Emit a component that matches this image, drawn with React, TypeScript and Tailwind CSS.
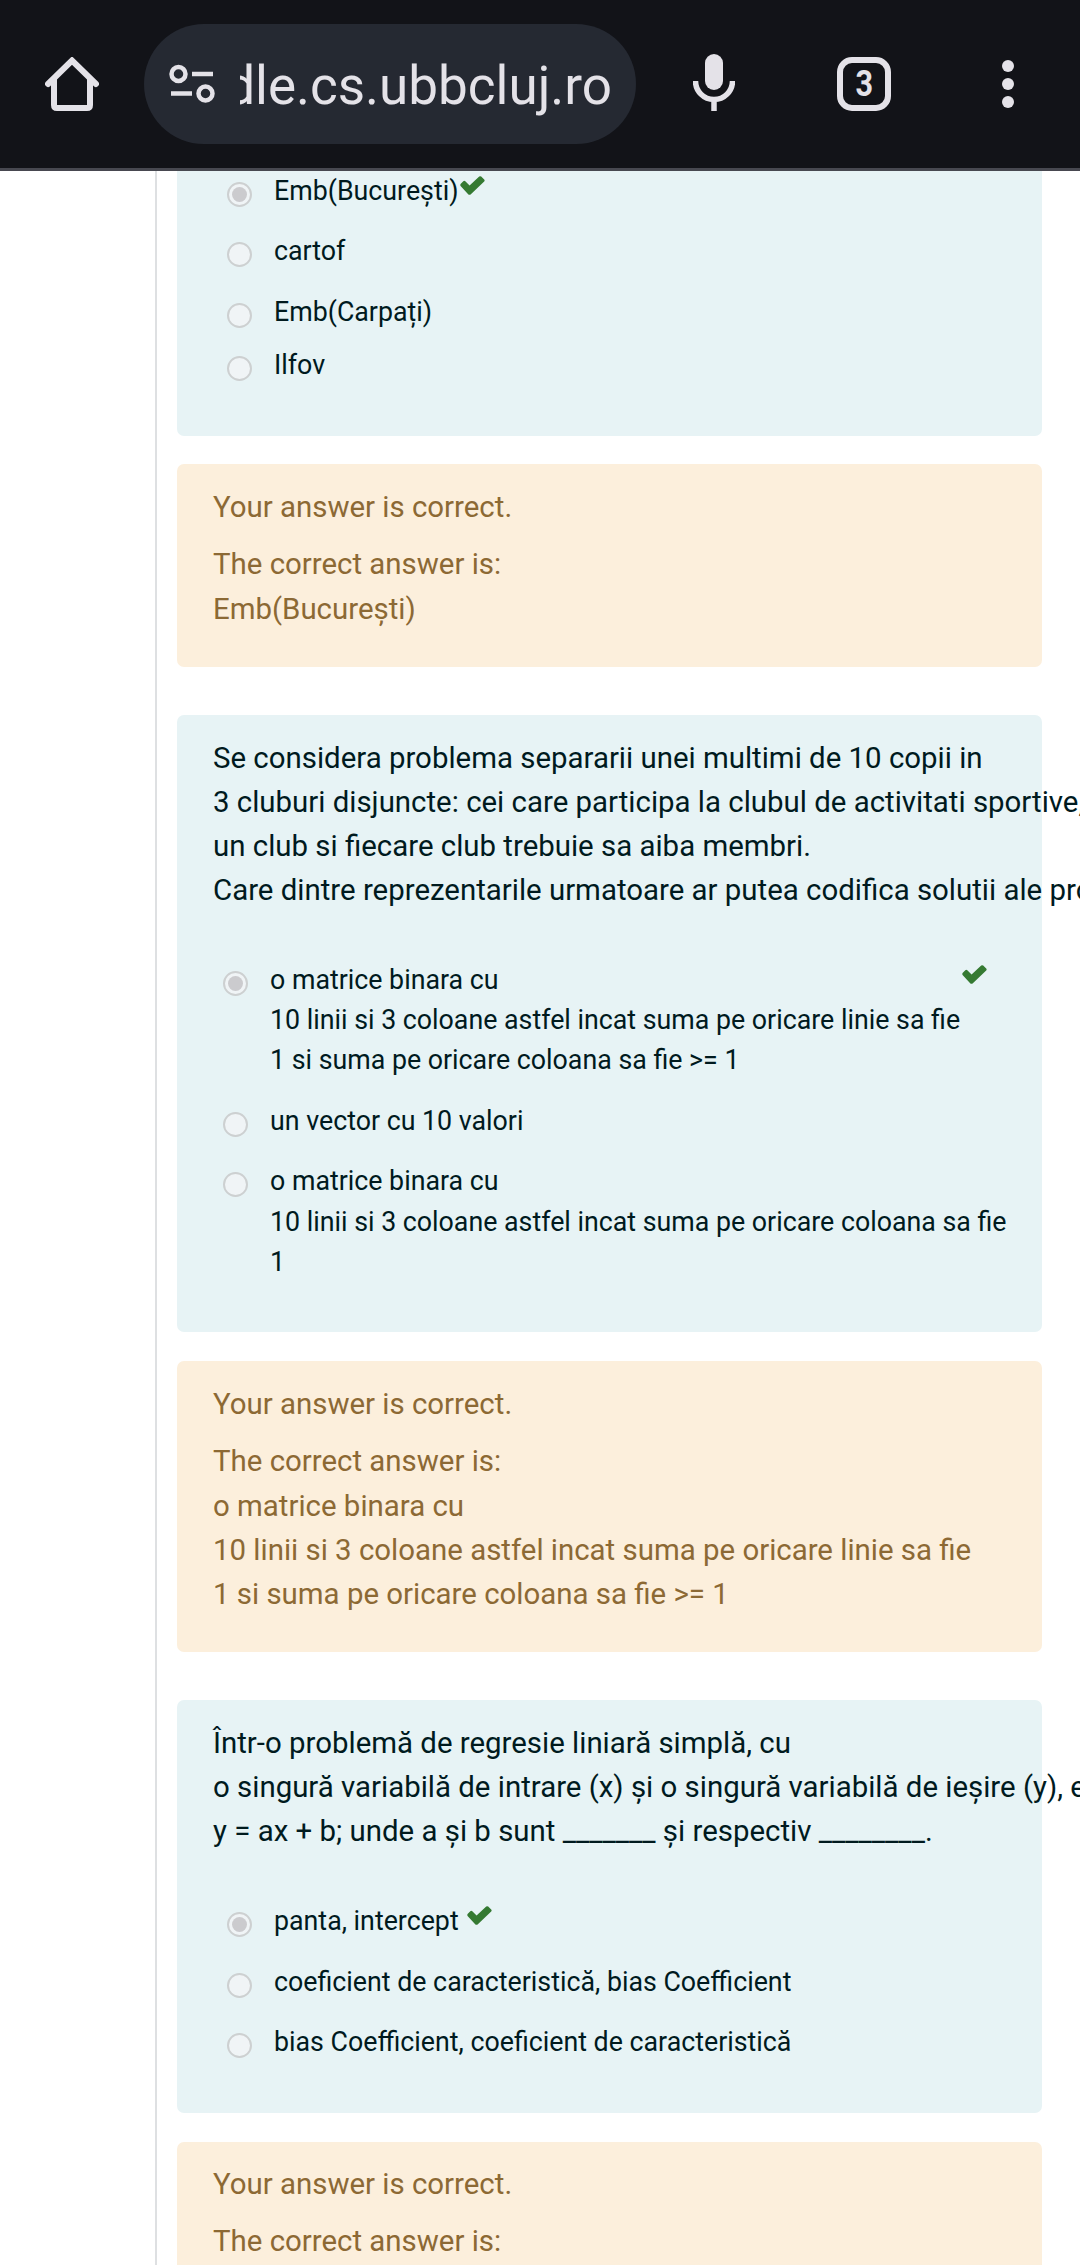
import React from "react";

function Check({ className = "" }: { className?: string }) {
  return (
    <svg viewBox="0 0 25 19" className={"h-[19px] w-[25px] shrink-0 fill-[#357a32] " + className}>
      <path d="M.8 7.800 3.300 5.300Q4.300 4.400 5.300 5.300L9.600 9.500 19.200.6Q20.200-.3 21.200.6L24.200 3.600Q25.100 4.600 24.200 5.600L10.600 18.400Q9.500 19.300 8.400 18.400L.8 10.300Q-.2 9 .8 7.800Z" />
    </svg>
  );
}

function Radio({ on = false }: { on?: boolean }) {
  return (
    <span className="mt-[11px] flex size-[25px] shrink-0 items-center justify-center rounded-full border-2 border-[#cdd0d1] bg-[#f0f4f6]">
      {on && <span className="size-[15px] rounded-full bg-[#cbcbce]" />}
    </span>
  );
}

type OptionProps = { lines: string[]; on?: boolean; check?: string; className?: string };

function Option({ lines, on, check, className = "leading-[40px]" }: OptionProps) {
  return (
    <div className={"flex items-start whitespace-nowrap text-[26.78px] text-[#001a1e] " + className}>
      <Radio on={on} />
      <div className="ml-[22px]">
        {lines.map((l) => (
          <div key={l}>{l}</div>
        ))}
      </div>
      {check && <Check className={check} />}
    </div>
  );
}

function Feedback({ lines, className = "" }: { lines: string[]; className?: string }) {
  return (
    <div className={"rounded-[7px] bg-[#fcefdc] pl-[36px] text-[29.42px] leading-[44px] whitespace-nowrap text-[#8c6934] " + className}>
      <div>Your answer is correct.</div>
      <div className="mt-[13px] mb-px">The correct answer is:</div>
      {lines.map((l) => (
        <div key={l}>{l}</div>
      ))}
    </div>
  );
}

function Prompt({ lines }: { lines: string[] }) {
  return (
    <div className="pl-[36px] pt-[21px] text-[29.42px] leading-[44px] whitespace-nowrap text-[#001a1e]">
      {lines.map((l) => (
        <div key={l}>{l}</div>
      ))}
    </div>
  );
}

export default function App() {
  return (
    <div className="flex h-[2265px] w-[1080px] flex-col overflow-hidden bg-white font-['Roboto',sans-serif]">
      <header className="flex h-[171px] shrink-0 items-center border-b-[3px] border-[#474850] bg-[#121318]">
        <svg viewBox="0 0 54 54" className="ml-[45px] size-[54px] shrink-0 fill-none stroke-[#e4e2e8] stroke-[6]">
          <path d="M3 27 27 3.500 51 27" strokeLinecap="round" />
          <path d="M9 22V48Q9 51 12 51H42Q45 51 45 48V22" />
        </svg>
        <div className="ml-[45px] flex h-[120px] w-[492px] items-center rounded-full bg-[#252932]">
          <svg viewBox="0 0 46 40" className="ml-[25px] h-[40px] w-[46px] shrink-0 fill-none stroke-[#e4e2e8] stroke-[4.5]">
            <circle cx="9.500" cy="10" r="7" />
            <path d="M23 10H44M2 29.500H23" />
            <circle cx="36.500" cy="29.500" r="7" />
          </svg>
          <div className="ml-[25px] flex w-[372px] justify-end overflow-hidden pt-[4px] text-[53px] leading-[68px] whitespace-nowrap text-[#e4e2e8]">
            moodle.cs.ubbcluj.ro
          </div>
        </div>
        <svg viewBox="0 0 42 57" className="-mt-[3px] ml-[57px] h-[57px] w-[42px] shrink-0">
          <rect x="12" y="0" width="18" height="36" rx="9" fill="#e4e2e8" />
          <path d="M2.500 27A18.500 18.500 0 0 0 39.500 27M21 45V57" fill="none" stroke="#e4e2e8" strokeWidth="5.500" />
        </svg>
        <div className="ml-[102px] flex size-[54px] items-center justify-center rounded-[15px] border-[6px] border-[#e4e2e8] text-[36px] leading-[42px] font-bold text-[#e4e2e8]">
          <span className="scale-x-[0.85]">3</span>
        </div>
        <div className="ml-[111px] flex flex-col gap-[6px]">
          <span className="size-[12px] rounded-full bg-[#e4e2e8]" />
          <span className="size-[12px] rounded-full bg-[#e4e2e8]" />
          <span className="size-[12px] rounded-full bg-[#e4e2e8]" />
        </div>
      </header>

      <main className="ml-[155px] flex flex-1 flex-col border-l-2 border-[#dee0e2] pl-[20px]">
        <section className="h-[265px] w-[865px] shrink-0 rounded-b-[7px] bg-[#e7f3f5] pl-[50px]">
          <Option lines={["Emb(București)"]} on check="mt-[5px] ml-[2px]" />
          <Option lines={["cartof"]} className="mt-[20px] leading-[40px]" />
          <Option lines={["Emb(Carpați)"]} className="mt-[21px] leading-[40px]" />
          <Option lines={["Ilfov"]} className="mt-[13px] leading-[40px]" />
        </section>
        <Feedback lines={["Emb(București)"]} className="mt-[28px] h-[203px] w-[865px] shrink-0 pt-[21px]" />

        <section className="mt-[48px] h-[617px] w-[865px] shrink-0 rounded-[7px] bg-[#e7f3f5]">
          <Prompt
            lines={[
              "Se considera problema separarii unei multimi de 10 copii in",
              "3 cluburi disjuncte: cei care participa la clubul de activitati sportive,",
              "un club si fiecare club trebuie sa aiba membri.",
              "Care dintre reprezentarile urmatoare ar putea codifica solutii ale problemei",
            ]}
          />
          <div className="pt-[48px] pl-[46px]">
            <Option
              lines={["o matrice binara cu", "10 linii si 3 coloane astfel incat suma pe oricare linie sa fie", "1 si suma pe oricare coloana sa fie >= 1"]}
              on
              check="mt-[5px] ml-[2px]"
            />
            <Option lines={["un vector cu 10 valori"]} className="mt-[21px] leading-[40px]" />
            <Option
              lines={["o matrice binara cu", "10 linii si 3 coloane astfel incat suma pe oricare coloana sa fie", "1"]}
              className="mt-[20px] leading-[40.5px]"
            />
          </div>
        </section>
        <Feedback
          lines={["o matrice binara cu", "10 linii si 3 coloane astfel incat suma pe oricare linie sa fie", "1 si suma pe oricare coloana sa fie >= 1"]}
          className="mt-[29px] h-[291px] w-[865px] shrink-0 pt-[21px]"
        />

        <section className="mt-[48px] h-[413px] w-[865px] shrink-0 rounded-[7px] bg-[#e7f3f5]">
          <Prompt
            lines={[
              "Într-o problemă de regresie liniară simplă, cu",
              "o singură variabilă de intrare (x) și o singură variabilă de ieșire (y), ecuația",
              "y = ax + b; unde a și b sunt _______ și respectiv ________.",
            ]}
          />
          <div className="pt-[48px] pl-[50px]">
            <Option lines={["panta, intercept"]} on check="mt-[5px] ml-[8px]" />
            <Option lines={["coeficient de caracteristică, bias Coefficient"]} className="mt-[21px] leading-[40px]" />
            <Option lines={["bias Coefficient, coeficient de caracteristică"]} className="mt-[20px] leading-[40px]" />
          </div>
        </section>
        <Feedback lines={[]} className="mt-[29px] h-[150px] w-[865px] shrink-0 pt-[20px]" />
      </main>
    </div>
  );
}
